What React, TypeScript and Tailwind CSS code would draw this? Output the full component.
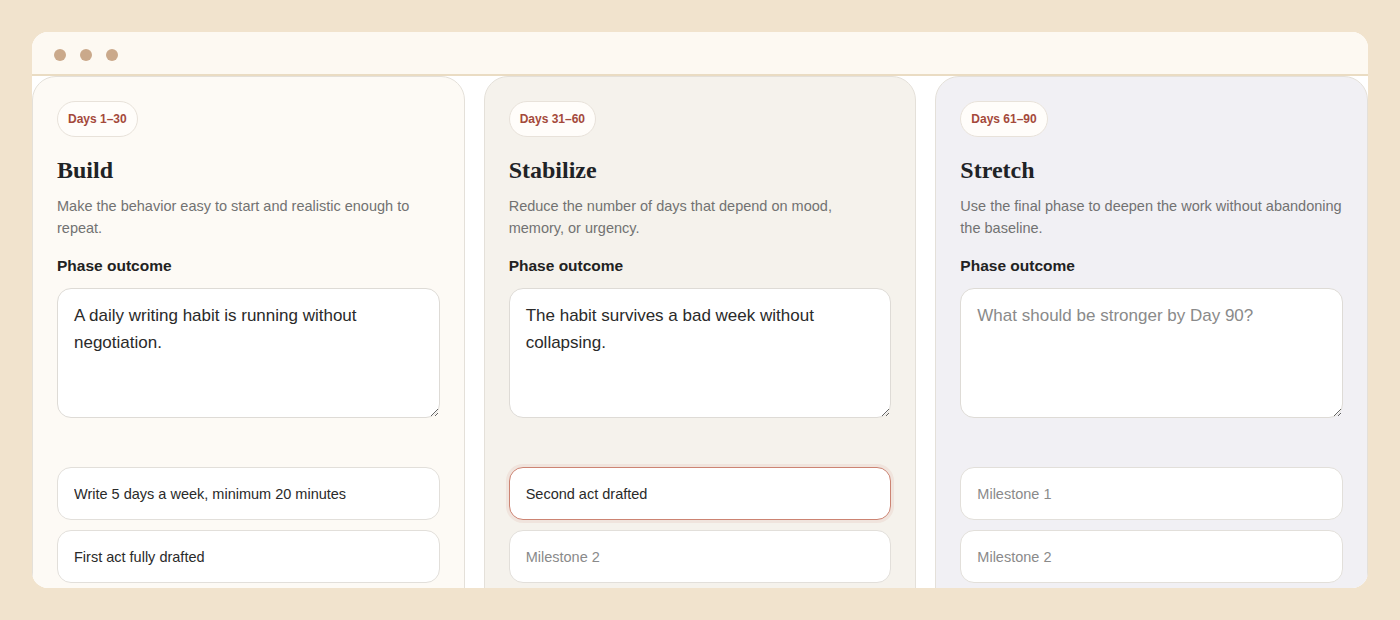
import React from 'react';

type Phase = {
  range: string;
  title: string;
  desc: string;
  descWidth?: string;
  outcome: string;
  placeholder: string;
  milestones: string[];
  focused?: number;
  tone: string;
};

const phases: Phase[] = [
  {
    range: 'Days 1–30',
    title: 'Build',
    desc: 'Make the behavior easy to start and realistic enough to repeat.',
    outcome: 'A daily writing habit is running without negotiation.',
    placeholder: 'What should be stronger by Day 30?',
    milestones: ['Write 5 days a week, minimum 20 minutes', 'First act fully drafted'],
    tone: 'bg-[#fdfaf5]',
  },
  {
    range: 'Days 31–60',
    title: 'Stabilize',
    desc: 'Reduce the number of days that depend on mood, memory, or urgency.',
    descWidth: 'max-w-[360px]',
    outcome: 'The habit survives a bad week without collapsing.',
    placeholder: 'What should be stronger by Day 60?',
    milestones: ['Second act drafted', ''],
    focused: 0,
    tone: 'bg-[#f5f2ec]',
  },
  {
    range: 'Days 61–90',
    title: 'Stretch',
    desc: 'Use the final phase to deepen the work without abandoning the baseline.',
    outcome: '',
    placeholder: 'What should be stronger by Day 90?',
    milestones: ['', ''],
    tone: 'bg-[#f1f0f4]',
  },
];

function PhaseCard({ p }: { p: Phase }) {
  return (
    <section className={`flex h-[540px] flex-col rounded-t-[24px] border border-[#e4e0d9] px-6 pt-6 ${p.tone}`}>
      <span className="self-start h-9 px-[10px] flex items-center rounded-full border border-[#e8e2da] bg-[#fffdfa] text-[12px] font-bold text-[#a4493a]">
        {p.range}
      </span>
      <h2 className="mt-[18px] text-[24px] leading-[30px] font-bold text-[#1f2326] font-['Liberation_Serif',serif]">
        {p.title}
      </h2>
      <p className={`mt-[10px] text-[14.5px] leading-[22px] text-[#727272] ${p.descWidth ?? ''}`}>{p.desc}</p>
      <label className="mt-4 text-[15.5px] leading-[22px] font-bold text-[#222]">Phase outcome</label>
      <textarea
        defaultValue={p.outcome}
        placeholder={p.placeholder}
        className="mt-[11px] h-[130px] shrink-0 rounded-[14px] border border-[#dedbd6] bg-white px-4 py-[13px] text-[17px] leading-[27px] text-[#2a2a2a] placeholder:text-[#8a8a8a] outline-none"
      />
      <div className="mt-[49px] flex flex-col gap-[10px]">
        {p.milestones.map((m, i) => (
          <input
            key={i}
            defaultValue={m}
            placeholder={`Milestone ${i + 1}`}
            className={`h-[53px] shrink-0 rounded-[14px] border bg-white px-4 text-[14.5px] text-[#2a2a2a] placeholder:text-[#8a8a8a] outline-none ${
              p.focused === i
                ? 'border-[#cc8473] shadow-[0_0_0_3px_rgba(204,132,115,0.12)]'
                : 'border-[#e2dfda]'
            }`}
          />
        ))}
      </div>
    </section>
  );
}

export default function App() {
  return (
    <div className="min-h-screen bg-[#f1e3cd] p-8 font-['Liberation_Sans',Arial,sans-serif]">
      <div className="h-[556px] overflow-hidden rounded-[16px] bg-white">
        <div className="flex h-[44px] items-center gap-[14px] border-b-2 border-[#eadcc3] bg-[#fdf9f2] px-[22px] pt-[3px]">
          <span className="h-3 w-3 rounded-full bg-[#caa98b]" />
          <span className="h-3 w-3 rounded-full bg-[#caa98b]" />
          <span className="h-3 w-3 rounded-full bg-[#caa98b]" />
        </div>
        <div className="grid grid-cols-3 gap-[19px]">
          {phases.map((p) => (
            <PhaseCard key={p.title} p={p} />
          ))}
        </div>
      </div>
    </div>
  );
}
